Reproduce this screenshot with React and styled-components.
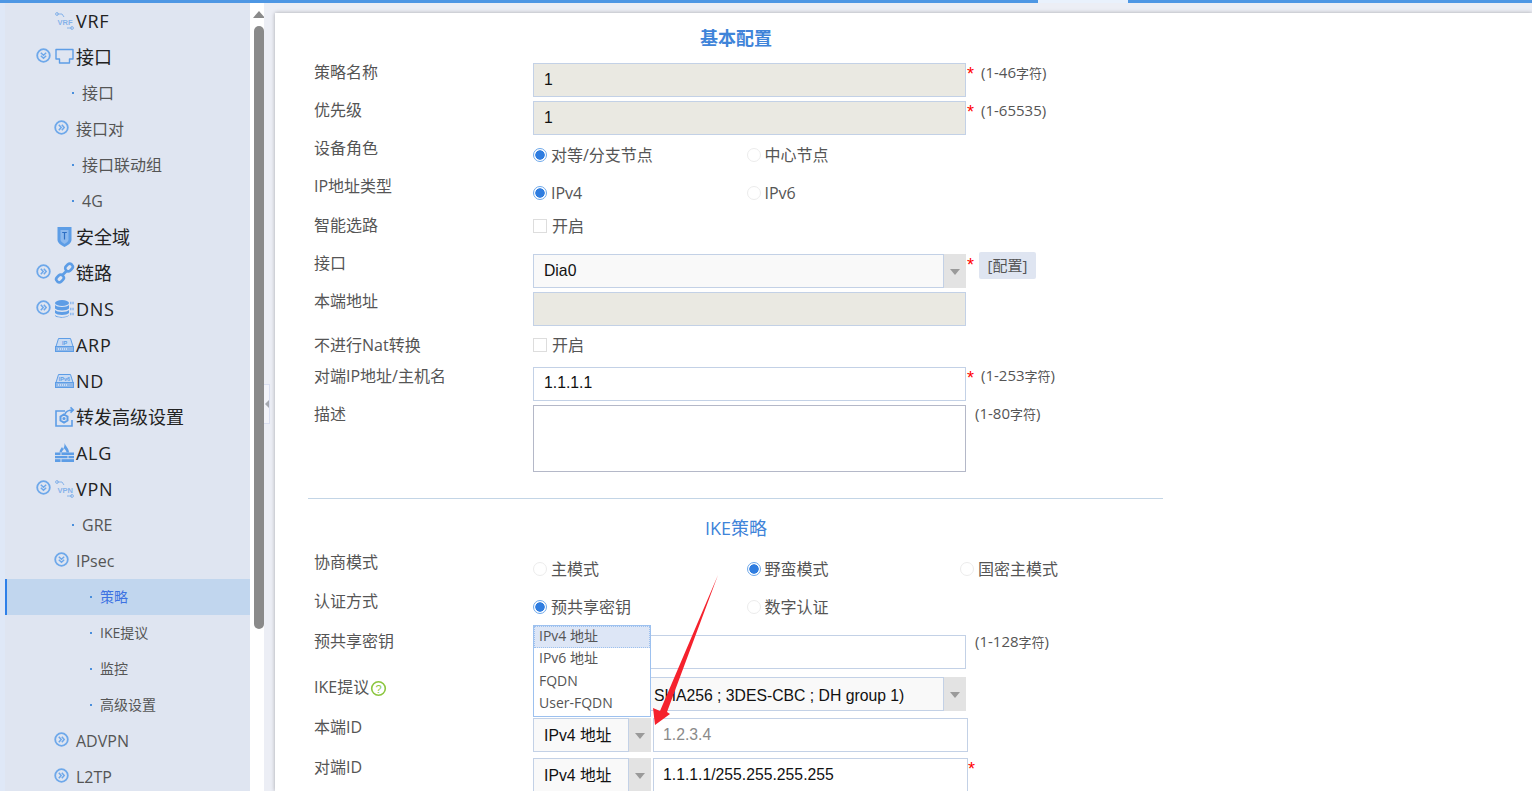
import React from "react";
import styled, { createGlobalStyle } from "styled-components";

const CJK = `"Open Sans", "Noto Sans CJK SC", sans-serif`;
const BLUE = "#5d9de6";

const Global = createGlobalStyle`
  html, body { margin: 0; padding: 0; height: 100%; overflow: hidden; background: #fff; }
  * { box-sizing: border-box; }
`;

const Page = styled.div`
  position: relative;
  width: 1532px;
  height: 791px;
  overflow: hidden;
  font-family: ${CJK};
`;
const TopBar = styled.div`
  display: flex;
  height: 3px;
  background: #4e97e4;
`;
const TopTab = styled.div`
  width: 90px;
  margin-left: 1038px;
  background: #e9f1fc;
`;
const Main = styled.div`
  display: flex;
  height: 788px;
`;
const Strip = styled.div`
  width: 5px;
  background: #dfe8f7;
`;
const Sidebar = styled.nav`
  width: 245px;
  background: #dfe5f1;
`;
const Item = styled.div`
  display: flex;
  align-items: center;
  height: 36px;
  padding-left: ${(p) => p.$indent}px;
  font-size: ${(p) => p.$size}px;
  color: ${(p) => (p.$active ? "#3d72e2" : p.$color || "#555")};
  background: ${(p) => (p.$active ? "#c1d6ee" : "transparent")};
  box-shadow: ${(p) => (p.$active ? "inset 2px 0 0 #2f80e8" : "none")};
  white-space: nowrap;
`;
// CJK glyphs sit a pixel low next to the latin metrics, so they get lifted
const Text = styled.span`
  margin-bottom: ${(p) => (p.$cjk ? 2 : 0)}px;
  letter-spacing: ${(p) => (p.$cjk ? 0 : p.$track || 0)}px;
`;
const Toggle = styled.svg`
  width: 15px;
  height: 15px;
  margin-bottom: 4px;
  margin-right: ${(p) => p.$gap}px;
  flex: none;
`;
const Glyph = styled.svg`
  width: 19px;
  height: 18px;
  margin-right: 2px;
  flex: none;
  overflow: visible;
`;
const Spacer = styled.span`
  width: ${(p) => p.$w}px;
  flex: none;
`;
const Dot = styled.i`
  width: 2px;
  height: 2px;
  margin-right: 8px;
  background: #4a8fdc;
  flex: none;
`;

const ScrollCol = styled.div`
  width: 14px;
  padding-left: 4px;
  background: #fff;
`;
const ScrollUp = styled.div`
  width: 0;
  height: 0;
  margin: 8px 0 8px -1px;
  border-left: 6px solid transparent;
  border-right: 6px solid transparent;
  border-bottom: 7px solid #8a8a8a;
`;
const Thumb = styled.div`
  width: 10px;
  height: 603px;
  background: #8a8a8a;
  border-radius: 5px;
`;
const Right = styled.div`
  position: relative;
  flex: 1;
  padding: 10px 0 0 11px;
  background: #eceef5;
`;
const Collapse = styled.div`
  position: absolute;
  left: 0;
  top: 381px;
  width: 6px;
  height: 40px;
  display: flex;
  align-items: center;
  justify-content: center;
  background: #f3f4fa;
  border: 1px solid #d9def0;
  border-left: none;
`;
const CollapseArrow = styled.i`
  width: 0;
  height: 0;
  border-top: 4px solid transparent;
  border-bottom: 4px solid transparent;
  border-right: 4px solid #a5a8b0;
`;
const Panel = styled.main`
  height: 100%;
  padding-left: 39px;
  background: #fff;
  box-shadow: 0 0 4px rgba(0, 0, 0, 0.3);
`;

const Title = styled.h2`
  width: 844px;
  margin: 0;
  height: 50px;
  line-height: 50px;
  text-align: center;
  font-size: 18px;
  font-weight: ${(p) => (p.$bold ? 700 : 400)};
  color: #3f84d9;
`;
const Row = styled.div`
  display: flex;
  height: ${(p) => p.$h || 38}px;
`;
const Label = styled.div`
  width: 219px;
  flex: none;
  display: flex;
  align-items: center;
  height: 18px;
  margin-top: ${(p) => p.$top || 0}px;
  font-size: 16px;
  line-height: 18px;
  color: #555;
`;
const Control = styled.div`
  position: relative;
  display: flex;
  align-items: flex-start;
  margin-top: ${(p) => p.$top || 0}px;
`;
const Input = styled.input`
  display: block;
  width: ${(p) => p.$w || 433}px;
  height: 34px;
  margin-left: ${(p) => p.$gap || 0}px;
  padding: 0 ${(p) => p.$pad || 10}px ${(p) => p.$lift || 0}px;
  border: 1px solid #c3d1e6;
  border-radius: 0;
  outline: none;
  background: ${(p) => (p.$locked ? "#eae9e2" : "#fff")};
  font: 15.75px "Liberation Sans", sans-serif;
  color: #111;
  &::placeholder { color: #8a8a8a; opacity: 1; }
`;
const TextArea = styled.textarea`
  display: block;
  width: 433px;
  height: 67px;
  border: 1px solid #b4b8c8;
  outline: none;
  resize: none;
  background: #fff;
`;
const Select = styled.div`
  display: flex;
  width: ${(p) => p.$w || 433}px;
  height: 34px;
  flex: none;
`;
const SelectValue = styled.div`
  flex: 1;
  min-width: 0;
  padding-left: ${(p) => p.$pad || 10}px;
  padding-top: ${(p) => p.$down || 0}px;
  background: #f9f9f9;
  border: 1px solid #c3d1e6;
  font: 15.75px/32px "Liberation Sans", "Noto Sans CJK SC", sans-serif;
  color: #111;
  white-space: nowrap;
  overflow: hidden;
`;
const SelectButton = styled.div`
  width: 22px;
  display: flex;
  align-items: center;
  justify-content: center;
  background: #e3e3e3;
  &::after {
    content: "";
    border-left: 5px solid transparent;
    border-right: 5px solid transparent;
    border-top: 6px solid #9a9a9a;
    margin-top: 2px;
  }
`;
const Star = styled.span`
  width: 7px;
  margin-left: ${(p) => p.$left ?? 1}px;
  margin-top: 3px;
  font: 18px/16px "Liberation Sans", sans-serif;
  color: #f00;
  flex: none;
`;
const Hint = styled.span`
  margin-left: ${(p) => p.$left ?? 7}px;
  margin-top: ${(p) => p.$top ?? 0}px;
  font-size: 15px;
  line-height: 18px;
  color: #555;
  white-space: nowrap;
  small { font-size: 13px; }
`;
const ConfigButton = styled.span`
  margin: -2px 0 0 5px;
  width: 57px;
  height: 27px;
  line-height: 27px;
  text-align: center;
  font-size: 15px;
  color: #555;
  background: #dfe5f1;
  border-radius: 2px;
`;
const Choice = styled.label`
  display: flex;
  align-items: center;
  width: ${(p) => p.$w || 213.5}px;
  height: 18px;
  font-size: 16px;
  color: #555;
`;
const Radio = styled.i`
  width: 14px;
  height: 14px;
  margin-right: 4px;
  border-radius: 50%;
  flex: none;
  border: 1px solid ${(p) => (p.$on ? "#6ea8ea" : "#ececec")};
  background: ${(p) => (p.$on ? "radial-gradient(circle, #2f7de0 0 4.4px, #fff 5px)" : "#fff")};
`;
const Check = styled.i`
  width: 14px;
  height: 14px;
  margin-right: 5px;
  border: 1px solid #ddd;
  background: #fff;
  flex: none;
`;
const Divider = styled.hr`
  width: 855px;
  height: 1px;
  margin: 0 0 4px -6px;
  border: none;
  background: #c3d5e6;
`;
const Help = styled.svg`
  width: 17px;
  height: 17px;
  margin: 2px 0 0 1px;
`;
const Menu = styled.ul`
  position: absolute;
  left: 0;
  top: -10px;
  z-index: 3;
  width: 118px;
  height: 92px;
  margin: 0;
  padding: 0;
  list-style: none;
  background: #fff;
  border: 1px solid #9dc1ef;
`;
const MenuItem = styled.li`
  height: 22.4px;
  line-height: 20px;
  padding-left: 5px;
  font-size: 14px;
  color: #555;
  background: ${(p) => (p.$on ? "#dde6f6" : "transparent")};
  outline: ${(p) => (p.$on ? "1px dotted #9dc1ef" : "none")};
  outline-offset: -1px;
`;
const Pointer = styled.svg`
  position: absolute;
  left: 640px;
  top: 570px;
  z-index: 5;
  width: 90px;
  height: 160px;
  pointer-events: none;
`;

const ToggleIcon = ({ open, gap }) => (
  <Toggle $gap={gap} viewBox="0 0 15 15" fill="none" stroke="#6ea8ea">
    <circle cx="7.5" cy="7.5" r="6.3" strokeWidth="1.8" />
    <path
      d={open ? "M4.8 4.8l2.700 2.400 2.700-2.400M4.800 7.800l2.700 2.400 2.700-2.400" : "M4.800 4.800l2.400 2.700-2.400 2.700M7.800 4.800l2.400 2.700-2.400 2.700"}
      strokeWidth="1.500"
    />
  </Toggle>
);

const NetIcon = ({ text }) => (
  <Glyph viewBox="0 0 19 18" fill="none" stroke="#86b3ea">
    <path d="M2 2h5l2 3M12 16h5" strokeWidth="1" />
    <circle cx="2" cy="2" r="1.400" />
    <circle cx="17" cy="16" r="1.400" />
    <text x="2.500" y="12.500" fontSize="7.500" fontWeight="700" fontFamily="Liberation Sans" fill="#86b3ea" stroke="none">
      {text}
    </text>
  </Glyph>
);

const DeviceIcon = ({ text }) => (
  <Glyph viewBox="0 0 19 18">
    <path d="M3.500 2.500h12L18 10.500H1z" fill="#c9dbf3" stroke={BLUE} />
    <rect x="0.500" y="10.500" width="18" height="5" fill="#8fb8ea" stroke={BLUE} />
    <path d="M3 13h10" stroke="#fff" strokeDasharray="1 1" />
    <text x="9.500" y="9" textAnchor="middle" fontSize="5.500" fontWeight="700" fontFamily="Liberation Sans" fill="#5d9de6">
      {text}
    </text>
  </Glyph>
);

const PortIcon = () => (
  <Glyph viewBox="0 0 19 18" fill="none">
    <path d="M1 1.500h17v9.500h-3.500v4h-10v-4H1z" stroke={BLUE} strokeWidth="1.400" strokeLinejoin="round" />
  </Glyph>
);

const ShieldIcon = () => (
  <Glyph viewBox="0 0 19 18">
    <path d="M2.500 -1h14v13c0 3-3.500 5-7 7-3.500-2-7-4-7-7z" fill={BLUE} />
    <path d="M5.500 2h8v9.500c0 2-2 3.300-4 4.500-2-1.200-4-2.500-4-4.500z" fill="#8db9ee" />
    <path d="M7.200 4.500h4.600M9.500 4.500v7" stroke="#2e6fc4" strokeWidth="1.200" fill="none" />
  </Glyph>
);

const ChainIcon = () => (
  <Glyph viewBox="0 0 19 18" fill="none" stroke={BLUE} strokeWidth="2.600">
    <rect x="10" y="0.500" width="8" height="6" rx="2.800" transform="rotate(-45 14 3.500)" />
    <rect x="1" y="11.500" width="8" height="6" rx="2.800" transform="rotate(-45 5 14.500)" />
    <path d="M7 11.500l5-5" />
  </Glyph>
);

const DbIcon = () => (
  <Glyph viewBox="0 0 19 18">
    <ellipse cx="7" cy="3" rx="7" ry="3" fill={BLUE} />
    <path d="M0 5c2 2.500 12 2.500 14 0v3.500c-2 2.500-12 2.500-14 0zM0 10c2 2.500 12 2.500 14 0v3c-2 2.500-12 2.500-14 0zM0 15c2 2.500 12 2.500 14 0 0 3-14 4-14 0z" fill={BLUE} />
    <path d="M15 3h4M15 9h4M15 14h4" stroke="#8db9ee" strokeWidth="2.400" strokeDasharray="1.500 .8" />
  </Glyph>
);

const ForwardIcon = () => (
  <Glyph viewBox="0 0 19 18" fill="none" stroke={BLUE} strokeWidth="1.600">
    <path d="M10 3H1v15h16v-6" />
    <path d="M10 6c1-3 3.500-4 8-4M15.500 -.7L18.300 2l-2.800 2.700" />
    <path d="M9 6.500l3.500 2v4l-3.500 2-3.500-2v-4z" strokeWidth="2" />
    <circle cx="9" cy="10.500" r="0.800" />
  </Glyph>
);

const FirewallIcon = () => (
  <Glyph viewBox="0 0 19 18">
    <path d="M9.500 -1c1 3 4.500 5.500 4.500 9.500H4.500c0-2.500 1.500-3.500 2.500-5.500.5 1 1 1.500 1.300 2C9.200 3 9.800 1 9.500 -1z" fill={BLUE} />
    <path d="M6.800 8.500c0-1.500 1.500-2.500 2.500-4 1 1.500 2.200 2.500 2.200 4z" fill="#dfe5f1" />
    <path d="M0 8.500h19V18H0z" fill={BLUE} />
    <path d="M0 11.500h19M0 14.700h19M6 8.500v3M13 11.500v3.200M6 14.700V18" stroke="#dfe5f1" strokeWidth="0.900" />
  </Glyph>
);

const hasCjk = (s) => /[\u4e00-\u9fff]/.test(s);

const Entry = ({ circle, icon, children }) => (
  <Item $indent={31} $size={18} $color="#222">
    {circle ? <ToggleIcon open={circle === "open"} gap={4} /> : <Spacer $w={19} />}
    {icon}
    <Text $cjk={hasCjk(children)} $track={0.7}>{children}</Text>
  </Item>
);
const Group = ({ open, children }) => (
  <Item $indent={49} $size={16}>
    <ToggleIcon open={open} gap={7} />
    <Text $cjk={hasCjk(children)}>{children}</Text>
  </Item>
);
const Leaf = ({ children }) => (
  <Item $indent={67} $size={16}>
    <Dot />
    <Text $cjk={hasCjk(children)}>{children}</Text>
  </Item>
);
const SubLeaf = ({ children, active }) => (
  <Item $indent={85} $size={14} $active={active}>
    <Dot />
    <Text $cjk={hasCjk(children)}>{children}</Text>
  </Item>
);

const Option = ({ on, children }) => (
  <Choice>
    <Radio $on={on} />
    <Text $cjk={hasCjk(children)}>{children}</Text>
  </Choice>
);
const Toggleable = () => (
  <Choice>
    <Check />
    <Text $cjk>开启</Text>
  </Choice>
);

const App = () => (
  <Page>
    <Global />
    <TopBar>
      <TopTab />
    </TopBar>
    <Main>
      <Strip />
      <Sidebar>
        <Entry icon={<NetIcon text="VRF" />}>VRF</Entry>
        <Entry circle="open" icon={<PortIcon />}>接口</Entry>
        <Leaf>接口</Leaf>
        <Group>接口对</Group>
        <Leaf>接口联动组</Leaf>
        <Leaf>4G</Leaf>
        <Entry icon={<ShieldIcon />}>安全域</Entry>
        <Entry circle="closed" icon={<ChainIcon />}>链路</Entry>
        <Entry circle="closed" icon={<DbIcon />}>DNS</Entry>
        <Entry icon={<DeviceIcon text="IP" />}>ARP</Entry>
        <Entry icon={<DeviceIcon text="IPv6" />}>ND</Entry>
        <Entry icon={<ForwardIcon />}>转发高级设置</Entry>
        <Entry icon={<FirewallIcon />}>ALG</Entry>
        <Entry circle="open" icon={<NetIcon text="VPN" />}>VPN</Entry>
        <Leaf>GRE</Leaf>
        <Group open>IPsec</Group>
        <SubLeaf active>策略</SubLeaf>
        <SubLeaf>IKE提议</SubLeaf>
        <SubLeaf>监控</SubLeaf>
        <SubLeaf>高级设置</SubLeaf>
        <Group>ADVPN</Group>
        <Group>L2TP</Group>
      </Sidebar>
      <ScrollCol>
        <ScrollUp />
        <Thumb />
      </ScrollCol>
      <Right>
        <Collapse>
          <CollapseArrow />
        </Collapse>
        <Panel>
          <Title $bold>基本配置</Title>

          <Row>
            <Label>策略名称</Label>
            <Control>
              <Input $locked readOnly value="1" />
              <Star>*</Star>
              <Hint>(1-46<small>字符</small>)</Hint>
            </Control>
          </Row>
          <Row>
            <Label>优先级</Label>
            <Control>
              <Input $locked readOnly value="1" />
              <Star>*</Star>
              <Hint>(1-65535)</Hint>
            </Control>
          </Row>
          <Row>
            <Label>设备角色</Label>
            <Control $top={7}>
              <Option on>对等/分支节点</Option>
              <Option>中心节点</Option>
            </Control>
          </Row>
          <Row>
            <Label>IP地址类型</Label>
            <Control $top={7}>
              <Option on>IPv4</Option>
              <Option>IPv6</Option>
            </Control>
          </Row>
          <Row $h={39}>
            <Label $top={1}>智能选路</Label>
            <Control $top={2}>
              <Toggleable />
            </Control>
          </Row>
          <Row>
            <Label>接口</Label>
            <Control>
              <Select>
                <SelectValue>Dia0</SelectValue>
                <SelectButton />
              </Select>
              <Star>*</Star>
              <ConfigButton>[配置]</ConfigButton>
            </Control>
          </Row>
          <Row>
            <Label>本端地址</Label>
            <Control>
              <Input $locked readOnly />
            </Control>
          </Row>
          <Row $h={37}>
            <Label $top={6}>不进行Nat转换</Label>
            <Control $top={6}>
              <Toggleable />
            </Control>
          </Row>
          <Row>
            <Label>对端IP地址/主机名</Label>
            <Control>
              <Input $lift={2} readOnly value="1.1.1.1" />
              <Star>*</Star>
              <Hint $top={-1}>(1-253<small>字符</small>)</Hint>
            </Control>
          </Row>
          <Row $h={93}>
            <Label>描述</Label>
            <Control>
              <TextArea readOnly />
              <Hint $left={9} $top={-1}>(1-80<small>字符</small>)</Hint>
            </Control>
          </Row>

          <Divider />
          <Title>IKE策略</Title>

          <Row $h={39}>
            <Label>协商模式</Label>
            <Control $top={7}>
              <Option>主模式</Option>
              <Option on>野蛮模式</Option>
              <Option>国密主模式</Option>
            </Control>
          </Row>
          <Row $h={40}>
            <Label>认证方式</Label>
            <Control $top={6}>
              <Option on>预共享密钥</Option>
              <Option>数字认证</Option>
            </Control>
          </Row>
          <Row $h={45}>
            <Label>预共享密钥</Label>
            <Control $top={3}>
              <Input readOnly />
              <Hint $left={9} $top={-3}>(1-128<small>字符</small>)</Hint>
              <Menu>
                <MenuItem $on>IPv4 地址</MenuItem>
                <MenuItem>IPv6 地址</MenuItem>
                <MenuItem>FQDN</MenuItem>
                <MenuItem>User-FQDN</MenuItem>
              </Menu>
            </Control>
          </Row>
          <Row $h={41}>
            <Label $top={1}>
              IKE提议
              <Help viewBox="0 0 17 17" fill="none">
                <circle cx="8.500" cy="8.500" r="6.800" stroke="#8cc63f" strokeWidth="1.600" />
                <text x="8.500" y="12.500" textAnchor="middle" fontSize="11" fontFamily="Liberation Sans" fill="#8cc63f">?</text>
              </Help>
            </Label>
            <Control>
              <Select>
                <SelectValue $pad={120} $down={2}>SHA256 ; 3DES-CBC ; DH group 1)</SelectValue>
                <SelectButton />
              </Select>
            </Control>
          </Row>
          <Row $h={40}>
            <Label>本端ID</Label>
            <Control>
              <Select $w={118}>
                <SelectValue $down={1}>IPv4 地址</SelectValue>
                <SelectButton />
              </Select>
              <Input $w={315} $gap={2} $pad={9} readOnly placeholder="1.2.3.4" />
            </Control>
          </Row>
          <Row $h={40}>
            <Label>对端ID</Label>
            <Control>
              <Select $w={118}>
                <SelectValue $down={1}>IPv4 地址</SelectValue>
                <SelectButton />
              </Select>
              <Input $w={315} $gap={2} $pad={9} readOnly value="1.1.1.1/255.255.255.255" />
              <Star $left={0}>*</Star>
            </Control>
          </Row>
        </Panel>
      </Right>
    </Main>
    <Pointer viewBox="640 570 90 160">
      <polygon points="718,575 667,712 670,714 655,725 653,708 660,711" fill="#f5222d" />
    </Pointer>
  </Page>
);

export default App;
